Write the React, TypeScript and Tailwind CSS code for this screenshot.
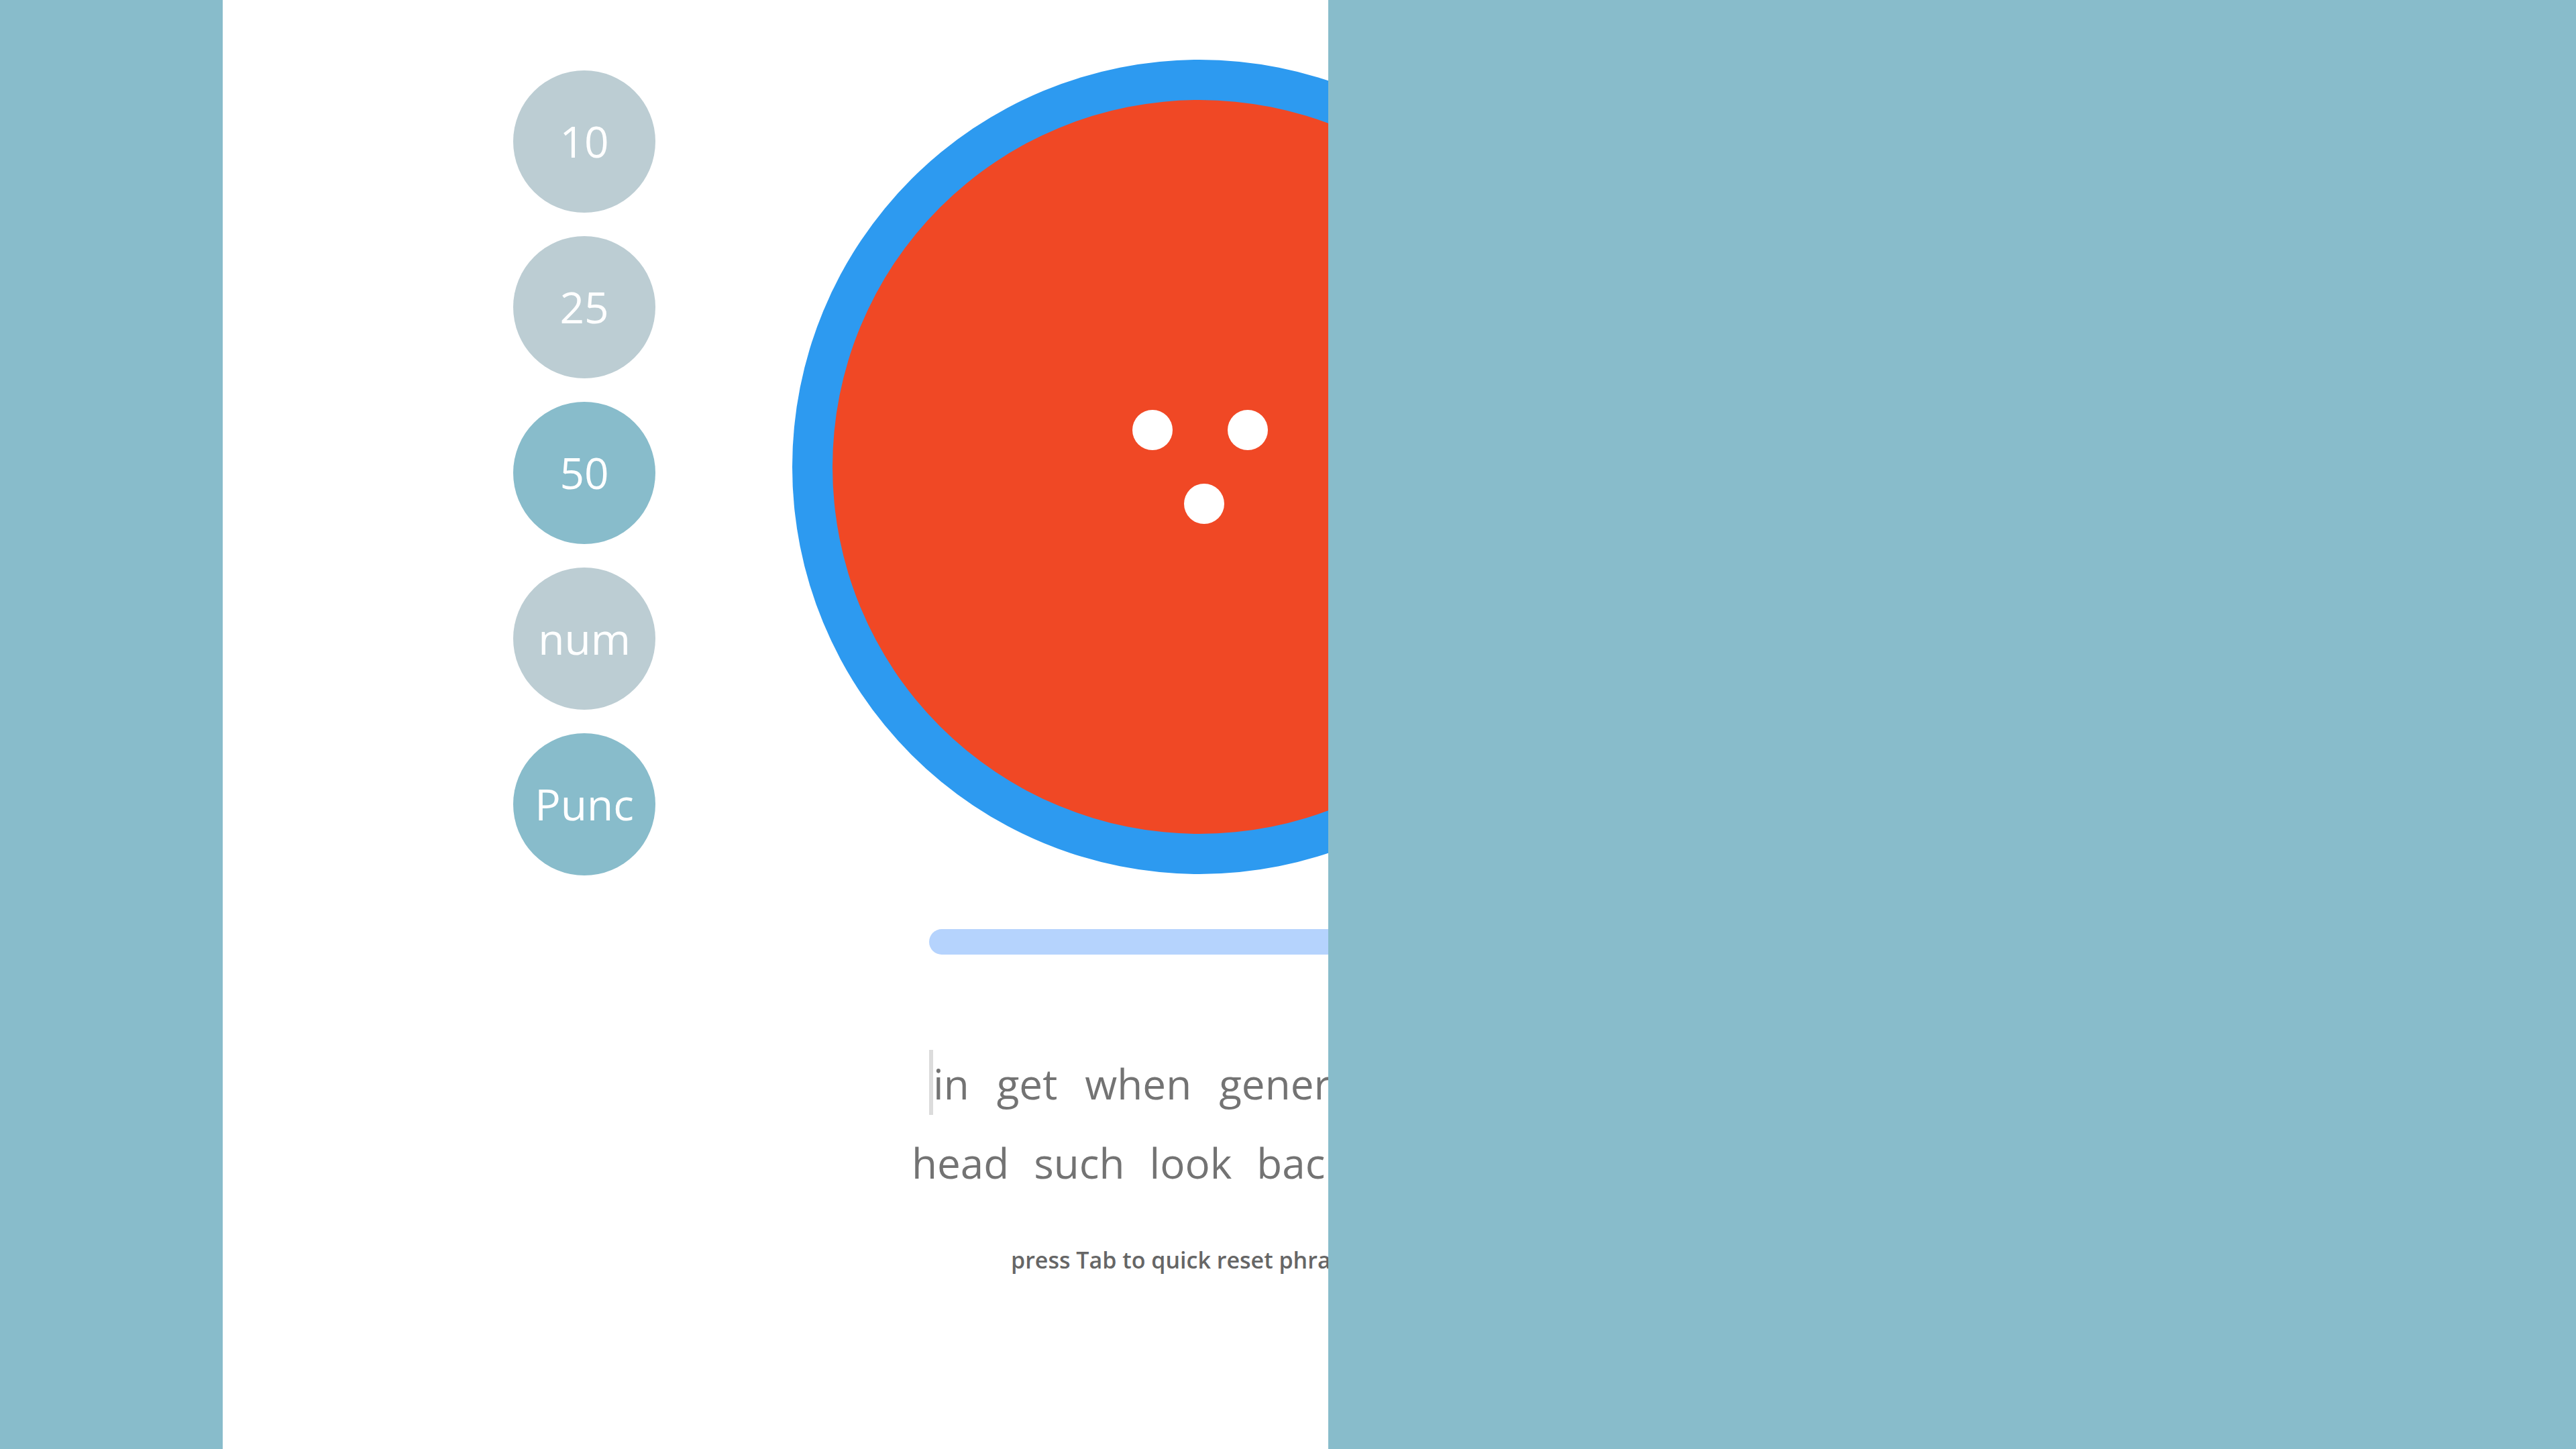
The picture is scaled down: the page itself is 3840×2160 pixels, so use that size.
const modes = [
  { label: "10", active: false },
  { label: "25", active: false },
  { label: "50", active: true },
  { label: "num", active: false },
  { label: "Punc", active: true },
];

const lineOne = ["in", "get", "when", "general", "there", "over"];
const lineTwo = ["head", "such", "look", "back", "down", "those"];

function ModeButton({ label, active }: { label: string; active: boolean }) {
  return (
    <button
      className={
        "w-[212px] h-[212px] rounded-full flex items-center justify-center text-white text-[64px] leading-none " +
        (active ? "bg-[#88bccb]" : "bg-[#bccdd3]")
      }
    >
      {label}
    </button>
  );
}

export default function App() {
  return (
    <main className="h-screen w-full flex bg-[#88bccb] font-['Open_Sans',sans-serif] overflow-hidden">
      {/* left strip */}
      <div className="w-[332px] shrink-0 bg-[#88bccb]" />

      {/* typing panel */}
      <section className="w-[1648px] shrink-0 bg-white flex items-start overflow-hidden">
        {/* word count / mode switches */}
        <div className="ml-[433px] mt-[105px] flex flex-col gap-[35px] shrink-0">
          {modes.map((m) => (
            <ModeButton key={m.label} label={m.label} active={m.active} />
          ))}
        </div>

        <div className="ml-[204px] mt-[89px] w-[1214px] shrink-0 flex flex-col">
          {/* timer face */}
          <div className="w-[1214px] h-[1214px] rounded-full bg-[#2d9af0] p-[60px]">
            <div className="relative w-full h-full rounded-full bg-[#f04825]">
              <span className="absolute left-[447px] top-[462px] w-[60px] h-[60px] rounded-full bg-white" />
              <span className="absolute left-[589px] top-[462px] w-[60px] h-[60px] rounded-full bg-white" />
              <span className="absolute left-[524px] top-[572px] w-[60px] h-[60px] rounded-full bg-white" />
            </div>
          </div>

          {/* progress */}
          <div className="mt-[82px] ml-[204px] w-[806px] h-[38px] rounded-full bg-[#b5d3fd]" />

          {/* words */}
          <div className="mt-[133px] flex flex-col text-[62px] leading-[118px] text-[#737373] whitespace-nowrap">
            <div className="flex items-start pl-[204px] h-[118px]">
              <span className="mt-[9px] w-[6px] h-[97px] bg-[#dcdcdc] shrink-0" />
              <div className="flex gap-[41px]">
                {lineOne.map((w, i) => (
                  <span key={i}>{w}</span>
                ))}
              </div>
            </div>
            <div className="flex gap-[37px] pl-[178px] h-[118px]">
              {lineTwo.map((w, i) => (
                <span key={i}>{w}</span>
              ))}
            </div>
          </div>

          <p className="mt-[66px] pl-[326px] text-[34px] leading-[40px] font-semibold text-[#666666] whitespace-nowrap">
            press Tab to quick reset phrase
          </p>
        </div>
      </section>

      {/* right drawer */}
      <div className="flex-1 bg-[#88bccb]" />
    </main>
  );
}
